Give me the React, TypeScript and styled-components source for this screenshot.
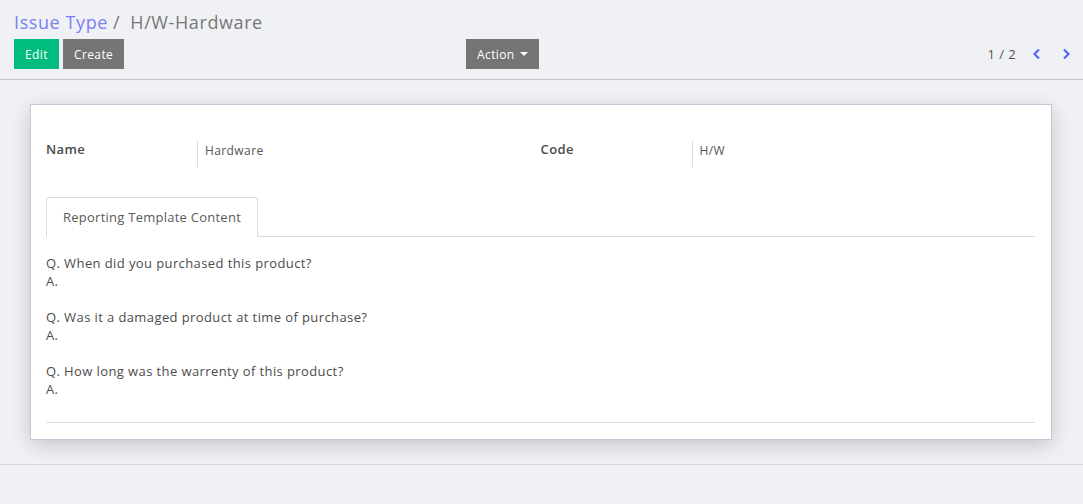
import React from "react";
import styled, { createGlobalStyle } from "styled-components";

const GlobalStyle = createGlobalStyle`
    html, body {
        margin: 0;
        padding: 0;
        background: #f0f1f5;
        font-family: "Open Sans", "Noto Sans", sans-serif;
        letter-spacing: 0.4px;
        color: #4c4c4c;
    }
`;

const Page = styled.div`
    display: flex;
    flex-direction: column;
    min-height: 504px;
`;

const ControlPanel = styled.div`
    padding: 8px 3px 10px 14px;
    border-bottom: 1px solid #c4c2d4;
`;

const Breadcrumb = styled.div`
    height: 28px;
    display: flex;
    align-items: center;
    font-size: 18px;
    letter-spacing: 0.6px;
    color: #777;

    .crumb {
        color: #7b7ff6;
    }
    .sep {
        margin: 0 10px 0 5px;
    }
`;

const ButtonRow = styled.div`
    display: grid;
    grid-template-columns: 452px 1fr auto;
    align-items: center;
    margin-top: 3px;
`;

const ButtonGroup = styled.div`
    display: flex;
    gap: 4px;
`;

const Button = styled.button<{ $primary?: boolean }>`
    height: 30px;
    padding: 0 11px;
    border: none;
    border-radius: 0;
    font-family: inherit;
    font-size: 12px;
    letter-spacing: 0.4px;
    color: #fff;
    background: ${(p) => (p.$primary ? "#00bc7f" : "#757575")};
    display: inline-flex;
    align-items: center;
    gap: 5px;
`;

const Caret = styled.span`
    width: 0;
    height: 0;
    border-left: 4px solid transparent;
    border-right: 4px solid transparent;
    border-top: 4px solid #fff;
`;

const Pager = styled.div`
    display: flex;
    align-items: center;
    font-size: 13px;
    color: #555;

    .value {
        margin-right: 6px;
    }
`;

const PagerArrow = styled.span`
    width: 29px;
    display: flex;
    justify-content: center;
    color: #5468f7;
`;

const Content = styled.div`
    padding: 24px 31px 24px 30px;
    border-bottom: 1px solid #d6d6dc;
`;

const Sheet = styled.div`
    background: #fff;
    border: 1px solid #c9c6d8;
    box-shadow: 0 5px 20px -1px rgba(0, 0, 0, 0.2);
    padding: 36px 16px 16px 15px;
`;

const FieldGrid = styled.div`
    display: grid;
    grid-template-columns: 1fr 1fr;
`;

const Field = styled.div`
    display: grid;
    grid-template-columns: 151px 1fr;
    height: 26px;
`;

const Label = styled.div`
    font-size: 13px;
    font-weight: 600;
    line-height: 14px;
    color: #4a4a4a;
    padding-top: 1px;
`;

const Value = styled.div`
    border-left: 1px solid #dcdcdc;
    padding: 2px 0 0 7px;
    font-size: 12px;
    line-height: 16px;
    color: #555;
`;

const Tabs = styled.div`
    margin-top: 30px;
    display: flex;
    border-bottom: 1px solid #dcdcdc;
`;

const Tab = styled.div`
    height: 40px;
    padding: 0 16px 2px;
    box-sizing: border-box;
    display: flex;
    align-items: center;
    font-size: 13px;
    letter-spacing: 0.25px;
    color: #5a5a5a;
    background: #fff;
    border: 1px solid #dcdcdc;
    border-bottom: none;
    border-radius: 3px 3px 0 0;
    margin-bottom: -1px;
    position: relative;
    z-index: 1;
`;

const TabPane = styled.div`
    padding: 17px 0 24px;
    font-size: 13px;
    line-height: 18px;
    color: #4c4c4c;
    border-bottom: 1px solid #dcdcdc;

    p {
        margin: 0 0 18px;
    }
    p:last-child {
        margin-bottom: 0;
    }
`;

const questions = [
    "Q. When did you purchased this product?",
    "Q. Was it a damaged product at time of purchase?",
    "Q. How long was the warrenty of this product?",
];

function Chevron({ left }: { left?: boolean }) {
    return (
        <svg width="10" height="12" viewBox="0 0 10 12">
            <path
                d={left ? "M7 1.5 L2.5 6 L7 10.5" : "M3 1.5 L7.5 6 L3 10.5"}
                fill="none"
                stroke="currentColor"
                strokeWidth="2.2"
            />
        </svg>
    );
}

export default function App() {
    return (
        <Page>
            <GlobalStyle />
            <ControlPanel>
                <Breadcrumb>
                    <span className="crumb">Issue Type</span>
                    <span className="sep">/</span>
                    <span>H/W-Hardware</span>
                </Breadcrumb>
                <ButtonRow>
                    <ButtonGroup>
                        <Button $primary>Edit</Button>
                        <Button>Create</Button>
                    </ButtonGroup>
                    <div>
                        <Button>
                            Action <Caret />
                        </Button>
                    </div>
                    <Pager>
                        <span className="value">1 / 2</span>
                        <PagerArrow>
                            <Chevron left />
                        </PagerArrow>
                        <PagerArrow>
                            <Chevron />
                        </PagerArrow>
                    </Pager>
                </ButtonRow>
            </ControlPanel>
            <Content>
                <Sheet>
                    <FieldGrid>
                        <Field>
                            <Label>Name</Label>
                            <Value>Hardware</Value>
                        </Field>
                        <Field>
                            <Label>Code</Label>
                            <Value>H/W</Value>
                        </Field>
                    </FieldGrid>
                    <Tabs>
                        <Tab>Reporting Template Content</Tab>
                    </Tabs>
                    <TabPane>
                        {questions.map((q) => (
                            <p key={q}>
                                {q}
                                <br />
                                A.
                            </p>
                        ))}
                    </TabPane>
                </Sheet>
            </Content>
        </Page>
    );
}
